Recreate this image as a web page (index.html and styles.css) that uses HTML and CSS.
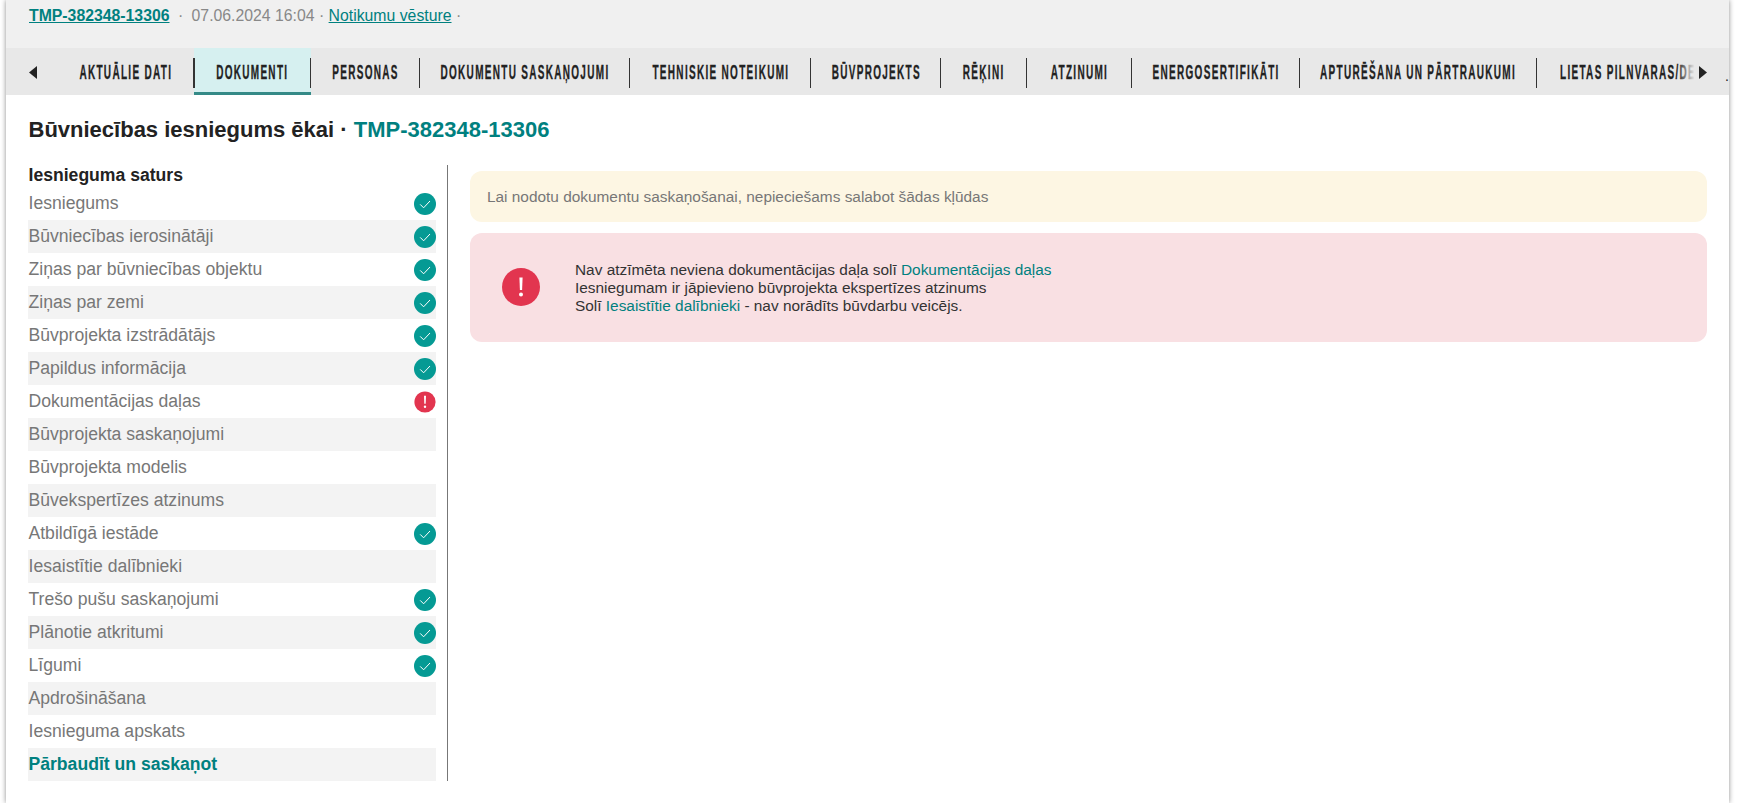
FILE: index.html
```html
<!doctype html>
<html lang="lv">
<head>
	<meta charset="UTF-8">
	<title>Būvniecības iesniegums ēkai</title>
	<link rel="stylesheet" href="styles.css">
</head>
<body>
	<div class="page">
		<!-- galvene -->
		<div class="top-info">
			<a href="#" class="top-id">TMP-382348-13306</a>
			<span class="top-sep">·</span>
			<span class="top-date">07.06.2024 16:04</span>
			<span class="top-dot">·</span>
			<a href="#" class="top-link">Notikumu vēsture</a>
			<span class="top-dot">·</span>
		</div>

		<!-- cilnes -->
		<div class="tabs">
			<div class="tabs-row">
				<div class="tab-arrow"><svg width="8" height="13" viewBox="0 0 8 13"><path d="M8 0 L0 6.5 L8 13 Z" fill="#222"/></svg></div>
				<a href="#" class="tab"><span>AKTUĀLIE DATI</span></a>
				<a href="#" class="tab tab-active"><span>DOKUMENTI</span></a>
				<a href="#" class="tab"><span>PERSONAS</span></a>
				<a href="#" class="tab"><span>DOKUMENTU SASKAŅOJUMI</span></a>
				<a href="#" class="tab"><span>TEHNISKIE NOTEIKUMI</span></a>
				<a href="#" class="tab"><span>BŪVPROJEKTS</span></a>
				<a href="#" class="tab"><span>RĒĶINI</span></a>
				<a href="#" class="tab"><span>ATZINUMI</span></a>
				<a href="#" class="tab"><span>ENERGOSERTIFIKĀTI</span></a>
				<a href="#" class="tab"><span>APTURĒŠANA UN PĀRTRAUKUMI</span></a>
				<a href="#" class="tab tab-last"><span>LIETAS PILNVARAS/DE</span></a>
			</div>
			<div class="tabs-fade"></div>
			<div class="tab-arrow-right"><svg width="8" height="13" viewBox="0 0 8 13"><path d="M0 0 L8 6.5 L0 13 Z" fill="#222"/></svg><span class="tabs-more">.</span></div>
		</div>

		<div class="content">
			<h1 class="title">Būvniecības iesniegums ēkai · <span class="title-id">TMP-382348-13306</span></h1>

			<div class="columns">
				<div class="side">
					<h4 class="side-head">Iesnieguma saturs</h4>
					<ul class="steps">
						<li><a href="#">Iesniegums</a><svg class="ic" viewBox="0 0 22 22"><use href="#ok"/></svg></li>
						<li><a href="#">Būvniecības ierosinātāji</a><svg class="ic" viewBox="0 0 22 22"><use href="#ok"/></svg></li>
						<li><a href="#">Ziņas par būvniecības objektu</a><svg class="ic" viewBox="0 0 22 22"><use href="#ok"/></svg></li>
						<li><a href="#">Ziņas par zemi</a><svg class="ic" viewBox="0 0 22 22"><use href="#ok"/></svg></li>
						<li><a href="#">Būvprojekta izstrādātājs</a><svg class="ic" viewBox="0 0 22 22"><use href="#ok"/></svg></li>
						<li><a href="#">Papildus informācija</a><svg class="ic" viewBox="0 0 22 22"><use href="#ok"/></svg></li>
						<li><a href="#">Dokumentācijas daļas</a><svg class="ic" viewBox="0 0 22 22"><use href="#err"/></svg></li>
						<li><a href="#">Būvprojekta saskaņojumi</a></li>
						<li><a href="#">Būvprojekta modelis</a></li>
						<li><a href="#">Būvekspertīzes atzinums</a></li>
						<li><a href="#">Atbildīgā iestāde</a><svg class="ic" viewBox="0 0 22 22"><use href="#ok"/></svg></li>
						<li><a href="#">Iesaistītie dalībnieki</a></li>
						<li><a href="#">Trešo pušu saskaņojumi</a><svg class="ic" viewBox="0 0 22 22"><use href="#ok"/></svg></li>
						<li><a href="#">Plānotie atkritumi</a><svg class="ic" viewBox="0 0 22 22"><use href="#ok"/></svg></li>
						<li><a href="#">Līgumi</a><svg class="ic" viewBox="0 0 22 22"><use href="#ok"/></svg></li>
						<li><a href="#">Apdrošināšana</a></li>
						<li><a href="#">Iesnieguma apskats</a></li>
						<li class="step-current"><a href="#">Pārbaudīt un saskaņot</a></li>
					</ul>
				</div>

				<div class="main">
					<div class="alert alert-warn">Lai nodotu dokumentu saskaņošanai, nepieciešams salabot šādas kļūdas</div>
					<div class="alert alert-err">
						<svg class="alert-icon" viewBox="0 0 38 38"><circle cx="19" cy="19" r="19" fill="#e2354f"/><path d="M17.4 9.5 h3.2 l-0.5 12.5 h-2.2 Z" fill="#fff"/><circle cx="19" cy="26.5" r="2" fill="#fff"/></svg>
						<div class="alert-text">
							<div>Nav atzīmēta neviena dokumentācijas daļa solī <a href="#">Dokumentācijas daļas</a></div>
							<div>Iesniegumam ir jāpievieno būvprojekta ekspertīzes atzinums</div>
							<div>Solī <a href="#">Iesaistītie dalībnieki</a> - nav norādīts būvdarbu veicējs.</div>
						</div>
					</div>
				</div>
			</div>
		</div>
	</div>

	<!-- ikonas -->
	<svg class="defs" width="0" height="0">
		<symbol id="ok" viewBox="0 0 22 22">
			<circle cx="11" cy="11" r="11" fill="#059a94"/>
			<path d="M6.2 11.4 L9.6 14.8 L16 8" fill="none" stroke="#fff" stroke-width="1"/>
		</symbol>
		<symbol id="err" viewBox="0 0 22 22">
			<circle cx="11" cy="11" r="10.6" fill="#e2354f"/>
			<path d="M10 4.8 h2 l-0.3 8 h-1.4 Z" fill="#fff"/>
			<circle cx="11" cy="15.8" r="1.2" fill="#fff"/>
		</symbol>
	</svg>
</body>
</html>
```

FILE: styles.css
```css
* {
	margin: 0px;
	padding: 0px;
	box-sizing: border-box;
}

ul,ul li {
	list-style: none;
}

body {
	background: #fff;
	font-family: "Liberation Sans", Arial, sans-serif;
	color: #222;
}

.page {
	margin: 0 9px 0 6px;
	height: 803px;
	background: #fff;
	box-shadow: 0 0 5px rgba(0,0,0,0.45);
}

.defs {
	display: block;
}

/* galvene */
.top-info {
	height: 48px;
	background: #f0f0f0;
	padding: 6px 0 0 23px;
	font-size: 15.8px;
	line-height: 20px;
	color: #888;
	white-space: nowrap;
}

.top-info a {
	color: #00807f;
}

.top-id {
	font-weight: bold;
}

.top-sep {
	margin: 0 4px;
}

/* cilnes */
.tabs {
	height: 47px;
	background: #e8e8e8;
	position: relative;
	overflow: hidden;
}

.tabs-row {
	display: grid;
	grid-template-columns: 52px 136px 117px 109px 210px 181px 130px 86px 105px 168px 237px 240px;
	height: 47px;
	width: 1800px;
}

.tab-arrow {
	padding: 17px 0 0 23px;
}

.tab {
	display: flex;
	align-items: center;
	justify-content: center;
	height: 47px;
	position: relative;
	color: #222;
	text-decoration: none;
	white-space: nowrap;
	padding-top: 2px;
}

.tab span {
	display: inline-block;
	flex: none;
	font-family: "Liberation Sans Narrow", "Liberation Sans", sans-serif;
	font-weight: bold;
	font-size: 20px;
	letter-spacing: 2.6px;
	-webkit-text-stroke: 0.3px #222;
	transform: scaleX(0.5);
}

.tab::after {
	content: "";
	position: absolute;
	right: 0;
	top: 10px;
	height: 30px;
	border-right: 1px solid #333;
}

.tab-last {
	justify-content: flex-start;
	padding-left: 23px;
}

.tab-last span {
	transform-origin: left center;
}

.tab-last::after {
	display: none;
}

.tab-active {
	background: #d6f0f0;
	border-bottom: 3px solid #358a87;
	padding-top: 5px;
}

.tab-active::before {
	content: "";
	position: absolute;
	left: 0;
	top: 10px;
	height: 30px;
	border-left: 1px solid #333;
}

.tabs-fade {
	position: absolute;
	right: 30px;
	top: 0;
	width: 22px;
	height: 47px;
	background: linear-gradient(to right, rgba(232,232,232,0), #e8e8e8 80%);
}

.tab-arrow-right {
	position: absolute;
	left: 1693px;
	top: 0;
	width: 30px;
	height: 47px;
	padding-top: 17px;
	background: #e8e8e8;
}

.tabs-more {
	position: absolute;
	right: 0;
	top: 20px;
	font-size: 14px;
	line-height: 16px;
}

/* sadaļa */
.content {
	padding: 0 22px;
}

.title {
	font-size: 22px;
	line-height: 26px;
	font-weight: bold;
	color: #222;
	padding: 22px 0 0 0.5px;
	height: 70px;
}

.title-id {
	color: #00807f;
}

.columns {
	display: flex;
}

.side {
	width: 420px;
	padding-right: 11px;
	border-right: 1px solid #777;
	height: 616px;
}

.side-head {
	font-size: 17.6px;
	line-height: 20px;
	height: 22px;
	padding-left: 0.5px;
	font-weight: bold;
	color: #222;
}

.steps li {
	height: 33px;
	display: flex;
	align-items: center;
	justify-content: space-between;
	padding-left: 0.5px;
	font-size: 17.6px;
}

.steps li:nth-child(even) {
	background: #f3f3f3;
}

.steps a {
	color: #777;
	text-decoration: none;
}

.steps .step-current a {
	color: #00807f;
	font-weight: bold;
}

.ic {
	width: 22px;
	height: 22px;
	display: block;
}

.main {
	flex: 1;
	padding: 6px 0 0 22px;
}

.alert {
	border-radius: 12px;
	font-size: 15.4px;
}

.alert-warn {
	height: 51px;
	line-height: 51px;
	padding-left: 17px;
	background: #fdf6e3;
	color: #777;
}

.alert-err {
	height: 109px;
	margin-top: 11px;
	background: #f9e0e3;
	display: flex;
	align-items: center;
	padding-left: 32px;
	color: #333;
	line-height: 18px;
}

.alert-icon {
	width: 38px;
	height: 38px;
	margin: 0 35px 2px 0;
	flex: none;
}

.alert-text a {
	color: #00807f;
	text-decoration: none;
}
```
